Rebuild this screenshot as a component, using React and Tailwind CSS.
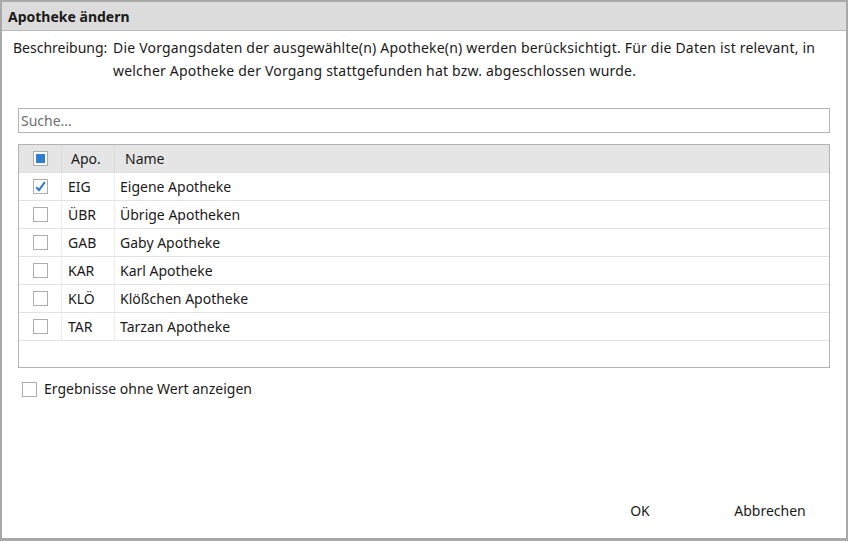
import React from "react";

const rows = [
  ["EIG", "Eigene Apotheke", true],
  ["ÜBR", "Übrige Apotheken", false],
  ["GAB", "Gaby Apotheke", false],
  ["KAR", "Karl Apotheke", false],
  ["KLÖ", "Klößchen Apotheke", false],
  ["TAR", "Tarzan Apotheke", false],
];

function Box({ checked, partial }) {
  return (
    <div className="w-[15px] h-[15px] border border-[#adadad] bg-white flex items-center justify-center">
      {partial && <div className="w-[9px] h-[9px] bg-[#2d7dd0]" />}
      {checked && (
        <svg width="13" height="13" viewBox="0 0 13 13">
          <path d="M2.2 7.2 L5 10.2 L10.8 2.2" fill="none" stroke="#2f79cf" strokeWidth="2" />
        </svg>
      )}
    </div>
  );
}

export default function App() {
  return (
    <div
      className="w-[848px] h-[541px] bg-white border-x-2 border-t-2 border-b-[3px] border-[#a9a9a9] flex flex-col text-[#1a1a1a] text-[14px]"
      style={{ fontFamily: '"Segoe UI", "Noto Sans", "Open Sans", sans-serif' }}
    >
      <div className="h-[29px] bg-[#dcdcdc] border-b border-[#b9b9b9] flex items-center pl-[6px] font-bold text-[14px] shrink-0">
        Apotheke ändern
      </div>
      <div className="flex pl-[11px] pt-[5px] leading-[23px]">
        <div className="w-[100px] shrink-0">Beschreibung:</div>
        <div className="tracking-[0.2px]">
          Die Vorgangsdaten der ausgewählte(n) Apotheke(n) werden berücksichtigt. Für die Daten ist relevant, in
          <br />
          welcher Apotheke der Vorgang stattgefunden hat bzw. abgeschlossen wurde.
        </div>
      </div>
      <div className="mx-[16px] mt-[26px] h-[25px] border border-[#b4b4b4] flex items-center px-[2px] text-[#6e6e6e]">
        Suche...
      </div>
      <div className="mx-[16px] mt-[11px] h-[224px] border border-[#b4b4b4] flex flex-col">
        <div className="h-[28px] bg-[#e5e5e5] flex border-b border-[#e0e0e0]">
          <div className="w-[43px] flex items-center justify-center border-r border-[#dadada]">
            <Box partial />
          </div>
          <div className="w-[53px] flex items-center pl-[9px] border-r border-[#dadada]">Apo.</div>
          <div className="flex-1 flex items-center pl-[10px]">Name</div>
        </div>
        {rows.map(([code, name, checked]) => (
          <div key={code} className="h-[28px] flex border-b border-[#e3e3e3]">
            <div className="w-[43px] flex items-center justify-center border-r border-[#ececec]">
              <Box checked={checked} />
            </div>
            <div className="w-[53px] flex items-center pl-[6px] border-r border-[#ececec]">{code}</div>
            <div className="flex-1 flex items-center pl-[5px]">{name}</div>
          </div>
        ))}
        <div className="flex-1" />
      </div>
      <div className="mx-[20px] mt-[12px] flex items-center gap-[7px]">
        <Box />
        <span className="-mt-[2px]">Ergebnisse ohne Wert anzeigen</span>
      </div>
      <div className="flex-1" />
      <div className="flex justify-end pb-[17px] pr-[29px]">
        <div className="w-[80px] text-center">OK</div>
        <div className="w-[94px] ml-[43px] text-center">Abbrechen</div>
      </div>
    </div>
  );
}
